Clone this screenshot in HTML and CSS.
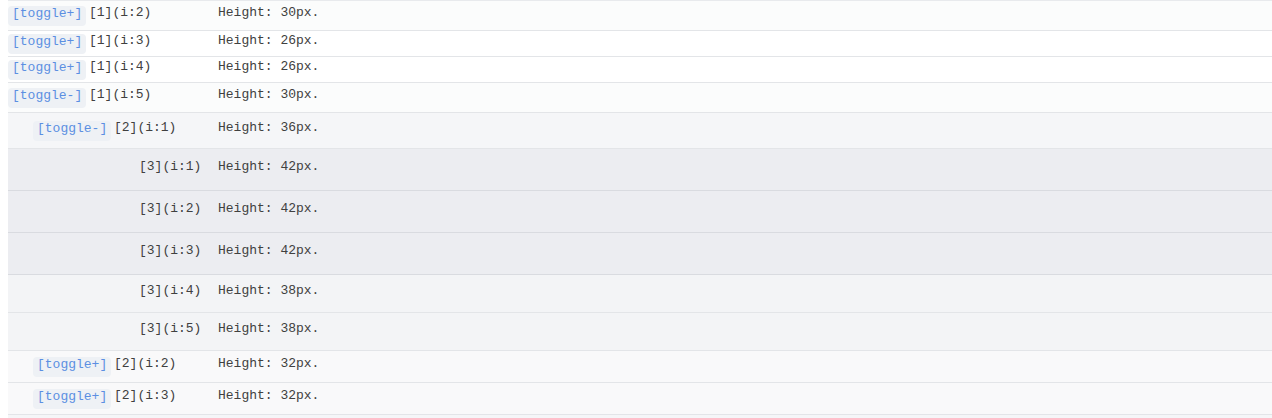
FILE: index.html
```html
<!DOCTYPE html>
<html>
<head>
<meta charset="utf-8">
<link rel="stylesheet" href="styles.css">
</head>
<body>
<div class="list">
  <div class="row l1 tint h30"><div class="label"><span class="toggle">[toggle+]</span><span class="name">[1](i:2)</span></div><span class="val">Height: 30px.</span></div>
  <div class="row l1 h26"><div class="label"><span class="toggle">[toggle+]</span><span class="name">[1](i:3)</span></div><span class="val">Height: 26px.</span></div>
  <div class="row l1 h26"><div class="label"><span class="toggle">[toggle+]</span><span class="name">[1](i:4)</span></div><span class="val">Height: 26px.</span></div>
  <div class="row l1 tint h30"><div class="label"><span class="toggle">[toggle-]</span><span class="name">[1](i:5)</span></div><span class="val">Height: 30px.</span></div>
  <div class="row l2 open h36"><div class="label"><span class="toggle">[toggle-]</span><span class="name">[2](i:1)</span></div><span class="val">Height: 36px.</span></div>
  <div class="row l3 dark h42"><div class="label"><span class="toggle ghost"></span><span class="name">[3](i:1)</span></div><span class="val">Height: 42px.</span></div>
  <div class="row l3 dark h42"><div class="label"><span class="toggle ghost"></span><span class="name">[3](i:2)</span></div><span class="val">Height: 42px.</span></div>
  <div class="row l3 dark h42"><div class="label"><span class="toggle ghost"></span><span class="name">[3](i:3)</span></div><span class="val">Height: 42px.</span></div>
  <div class="row l3 mid h38"><div class="label"><span class="toggle ghost"></span><span class="name">[3](i:4)</span></div><span class="val">Height: 38px.</span></div>
  <div class="row l3 mid h38"><div class="label"><span class="toggle ghost"></span><span class="name">[3](i:5)</span></div><span class="val">Height: 38px.</span></div>
  <div class="row l2 light h32"><div class="label"><span class="toggle">[toggle+]</span><span class="name">[2](i:2)</span></div><span class="val">Height: 32px.</span></div>
  <div class="row l2 light h32"><div class="label"><span class="toggle">[toggle+]</span><span class="name">[2](i:3)</span></div><span class="val">Height: 32px.</span></div>
  <div class="row l2 open h32"><div class="label"></div><span class="val"></span></div>
</div>
</body>
</html>
```
FILE: styles.css
```css
html, body {
  margin: 0;
  padding: 0;
  background: #ffffff;
  overflow: hidden;
}
body {
  padding-left: 8px;
}
.list {
  border-top: 1px solid #e8eaed;
  font-family: "Liberation Mono", "Courier New", monospace;
  font-size: 13px;
  color: #404040;
}
.row {
  display: flex;
  align-items: center;
  box-sizing: border-box;
  border-bottom: 1px solid #e3e5e8;
  background: #ffffff;
}
.tint { background: #fbfcfc; }
.open { background: #f5f6f8; }
.dark { background: #ecedf1; border-bottom-color: #d9dbe0; }
.mid { background: #f3f4f6; }
.light { background: #f9f9fa; }
.h26 { height: 26px; }
.h30 { height: 30px; }
.h32 { height: 32px; }
.h36 { height: 36px; }
.h38 { height: 38px; }
.h42 { height: 42px; }
.label {
  width: 210px;
  flex: none;
  display: flex;
  align-items: center;
  gap: 3px;
  box-sizing: border-box;
}
.l2 .label { padding-left: 25px; }
.l3 .label { padding-left: 50px; }
.toggle {
  display: inline-block;
  width: 78px;
  box-sizing: border-box;
  height: 20px;
  line-height: 15px;
  padding: 0 4px 5px;
  border-radius: 4px;
  background: #eef1f5;
  color: #5b8fe2;
  white-space: nowrap;
}
.toggle.ghost { background: transparent; }
.name, .val {
  white-space: nowrap;
  line-height: 15px;
  padding-bottom: 6px;
}
```
